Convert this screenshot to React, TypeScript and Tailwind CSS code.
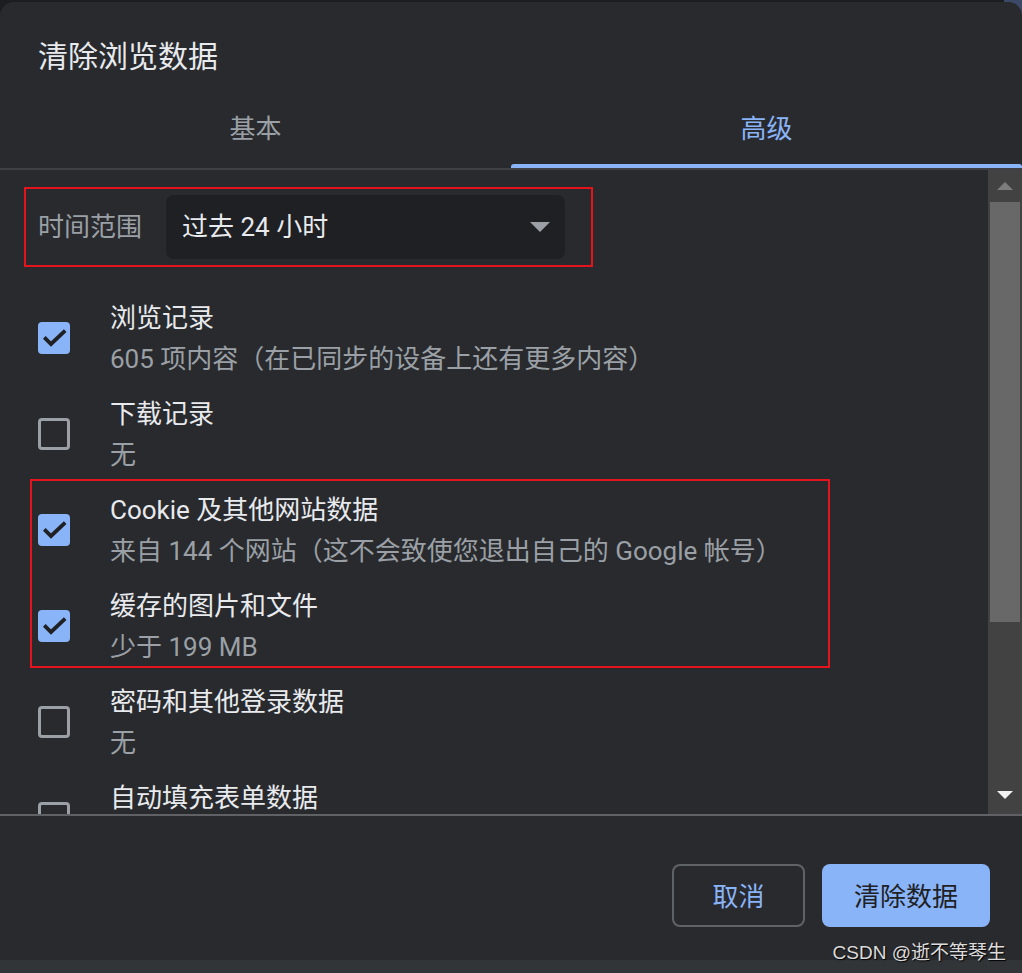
import { useState } from "react";

type Item = { title: string; sub: string; checked: boolean };

const items: Item[] = [
  { title: "浏览记录", sub: "605 项内容（在已同步的设备上还有更多内容）", checked: true },
  { title: "下载记录", sub: "无", checked: false },
  { title: "Cookie 及其他网站数据", sub: "来自 144 个网站（这不会致使您退出自己的 Google 帐号）", checked: true },
  { title: "缓存的图片和文件", sub: "少于 199 MB", checked: true },
  { title: "密码和其他登录数据", sub: "无", checked: false },
  { title: "自动填充表单数据", sub: "无", checked: false },
  { title: "网站设置", sub: "无", checked: false },
  { title: "托管应用数据", sub: "无", checked: false },
];

const font = "font-['Roboto','Noto_Sans_CJK_SC',sans-serif]";

function Checkbox({ checked, onClick }: { checked: boolean; onClick: () => void }) {
  if (checked) {
    return (
      <button onClick={onClick} className="w-[32px] h-[32px] shrink-0 rounded-[4px] bg-[#8ab4f8] flex items-center justify-center">
        <svg width="32" height="32" viewBox="0 0 32 32">
          <polyline points="6.3,15.3 13,22 27.2,8.6" fill="none" stroke="#202124" strokeWidth="3.8" />
        </svg>
      </button>
    );
  }
  return <button onClick={onClick} className="w-[32px] h-[32px] shrink-0 rounded-[4px] border-[3px] border-[#9aa0a6]" />;
}

function Row({ item, onToggle }: { item: Item; onToggle: () => void }) {
  return (
    <div className="flex items-center pl-[38px] gap-[40px] py-[8.5px]">
      <Checkbox checked={item.checked} onClick={onToggle} />
      <div className="flex flex-col text-[26px] leading-[38px]">
        <span className="text-[#e8eaed]">{item.title}</span>
        <span className="mt-[3px] text-[#9aa0a6]">{item.sub}</span>
      </div>
    </div>
  );
}

export default function App() {
  const [list, setList] = useState(items);
  const [tab, setTab] = useState(1);

  const toggle = (i: number) =>
    setList((l) => l.map((it, j) => (j === i ? { ...it, checked: !it.checked } : it)));

  return (
    <div className={`${font} w-[1022px] h-[973px] flex flex-col overflow-hidden bg-[linear-gradient(to_right,#1c1d1f_1004px,#3b4966_1004px)]`}>
      <div className="mt-[2px] flex-1 flex flex-col bg-[#292a2d] rounded-t-[14px]">
        {/* title */}
        <div className="h-[86px] pt-[34px] pl-[38px] text-[30px] leading-[42px] text-[#e8eaed]">清除浏览数据</div>

        {/* tabs */}
        <div className="h-[80px] flex">
          {["基本", "高级"].map((t, i) => (
            <button
              key={t}
              onClick={() => setTab(i)}
              className={`relative flex-1 flex items-center justify-center pt-[2px] text-[26px] ${tab === i ? "text-[#8ab4f8]" : "text-[#9aa0a6]"}`}
            >
              {t}
              {tab === i && <span className="absolute left-0 right-0 bottom-0 h-[4px] rounded-t-[3px] bg-[#8ab4f8]" />}
            </button>
          ))}
        </div>
        <div className="h-[2px] bg-[#3f4044]" />

        {/* body */}
        <div className="h-[644px] flex">
          <div className="flex-1 overflow-hidden">
            <div className="mt-[17px] ml-[24px] w-[569px] h-[80px] border-2 border-[#e5131d] flex items-center pl-[12px] gap-[24px]">
              <span className="text-[26px] text-[#9aa0a6]">时间范围</span>
              <div className="w-[399px] h-[64px] bg-[#1f2023] rounded-[8px] flex items-center justify-between pl-[16px] pr-[15px]">
                <span className="text-[26px] text-[#e8eaed]">过去 24 小时</span>
                <svg width="20" height="10" viewBox="0 0 20 10">
                  <polygon points="0,0 20,0 10,10" fill="#9aa0a6" />
                </svg>
              </div>
            </div>

            <div className="mt-[23px]">
              <Row item={list[0]} onToggle={() => toggle(0)} />
              <Row item={list[1]} onToggle={() => toggle(1)} />
              <div className="relative">
                <Row item={list[2]} onToggle={() => toggle(2)} />
                <Row item={list[3]} onToggle={() => toggle(3)} />
                <div className="absolute left-[30px] top-[-3px] w-[800px] h-[189px] border-2 border-[#e5131d] pointer-events-none" />
              </div>
              {list.slice(4).map((it, i) => (
                <Row key={it.title} item={it} onToggle={() => toggle(i + 4)} />
              ))}
            </div>
          </div>

          {/* scrollbar */}
          <div className="w-[34px] bg-[#424242] flex flex-col">
            <div className="h-[32px] flex items-center justify-center">
              <svg width="16" height="8" viewBox="0 0 16 8">
                <polygon points="0,8 16,8 8,0" fill="#7d7d7d" />
              </svg>
            </div>
            <div className="h-[420px] mx-[2px] bg-[#686868]" />
            <div className="flex-1" />
            <div className="h-[38px] flex items-center justify-center">
              <svg width="16" height="8" viewBox="0 0 16 8">
                <polygon points="0,0 16,0 8,8" fill="#f2f2f2" />
              </svg>
            </div>
          </div>
        </div>
        <div className="h-[2px] bg-[#5f6165]" />

        {/* footer */}
        <div className="relative flex-1 flex justify-end items-start pt-[48px] pr-[32px] gap-[17px]">
          <button className="w-[133px] h-[63px] pt-[3px] border-2 border-[#5f6368] rounded-[8px] text-[26px] text-[#8ab4f8]">取消</button>
          <button className="w-[168px] h-[63px] pt-[3px] bg-[#8ab4f8] rounded-[8px] text-[26px] text-[#202124]">清除数据</button>
          <span className="absolute right-[16px] top-[125px] text-[19px] leading-[24px] text-[#dcdcdc] font-['Liberation_Sans','Noto_Sans_CJK_SC',sans-serif] [text-shadow:1px_1px_1px_#000]">
            CSDN @逝不等琴生
          </span>
        </div>
      </div>
      <div className="h-[13px] bg-[#323538]" />
    </div>
  );
}
